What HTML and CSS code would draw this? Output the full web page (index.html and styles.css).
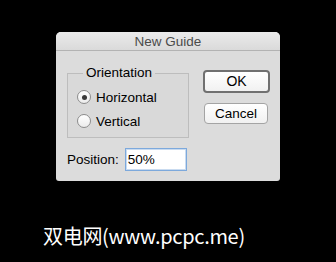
FILE: index.html
```html
<!DOCTYPE html>
<html>
<head>
<meta charset="utf-8">
<link rel="stylesheet" href="styles.css">
</head>
<body>
<div class="dialog">
  <div class="titlebar">New Guide</div>
  <div class="content">
    <div class="left">
      <fieldset class="group">
        <legend>Orientation</legend>
        <div class="radio-row"><span class="radio checked"></span><span>Horizontal</span></div>
        <div class="radio-row"><span class="radio"></span><span>Vertical</span></div>
      </fieldset>
      <div class="position-row">
        <span class="label">Position:</span>
        <span class="input">50%</span>
      </div>
    </div>
    <div class="buttons">
      <div class="btn default">OK</div>
      <div class="btn">Cancel</div>
    </div>
  </div>
</div>
<div class="caption">双电网(www.pcpc.me)</div>
</body>
</html>
```
FILE: styles.css
```css
html, body {
  margin: 0;
  padding: 0;
  background: #000;
}
body {
  width: 336px;
  height: 262px;
  overflow: hidden;
  font-family: "Liberation Sans", Arial, sans-serif;
  font-size: 13.5px;
  color: #000;
}
.dialog {
  margin: 32px 0 0 56px;
  width: 224px;
  height: 149px;
  background: #dcdcdc;
  border-radius: 5px 5px 3px 3px;
  overflow: hidden;
}
.titlebar {
  height: 18px;
  line-height: 20px;
  text-align: center;
  color: #4b4b4b;
  background: linear-gradient(#ebebeb, #dadada);
  border-bottom: 1px solid #b3b3b3;
}
.content {
  display: flex;
  padding: 14px 0 0 11px;
}
.left {
  width: 122px;
  display: flex;
  flex-direction: column;
}
.group {
  margin: 0;
  padding: 6px 0 6px 9px;
  border: 1px solid #bdbdbd;
  background: #d9d9d9;
  display: flex;
  flex-direction: column;
  gap: 4px;
  min-width: 0;
}
.group legend {
  margin-left: 6px;
  padding: 0 3px;
  line-height: 16px;
}
.radio-row {
  display: flex;
  align-items: center;
  height: 20px;
  gap: 5px;
}
.radio {
  width: 12px;
  height: 12px;
  border-radius: 50%;
  border: 1px solid #8c8c8c;
  background: linear-gradient(#ffffff, #ececec);
  position: relative;
  flex: none;
}
.radio.checked::after {
  content: "";
  position: absolute;
  left: 3.5px;
  top: 3.5px;
  width: 5px;
  height: 5px;
  border-radius: 50%;
  background: #3a3a3a;
}
.position-row {
  display: flex;
  align-items: center;
  margin-top: 10px;
  gap: 6px;
}
.input {
  width: 58px;
  height: 21px;
  line-height: 21px;
  padding-left: 2px;
  background: #fff;
  border: 1px solid #7da9dc;
  box-shadow: inset 0 0 0 1px #c9dbf0;
}
.buttons {
  margin-left: 14px;
  margin-top: 5px;
  display: flex;
  flex-direction: column;
  align-items: flex-start;
  gap: 10px;
}
.btn {
  width: 62px;
  height: 19px;
  line-height: 19px;
  text-align: center;
  background: linear-gradient(#ffffff, #f1f1f1);
  border: 1px solid #a4a4a4;
  border-radius: 4px;
  margin-left: 1px;
}
.btn.default {
  width: 63px;
  height: 19px;
  border: 2px solid #707070;
  margin-left: 0;
  font-size: 14px;
}
.caption {
  margin: 45px 0 0 43px;
  color: #fff;
  font-family: "Noto Sans CJK SC", "Liberation Sans", sans-serif;
  font-size: 20px;
  line-height: 20px;
  letter-spacing: -0.3px;
}
```
